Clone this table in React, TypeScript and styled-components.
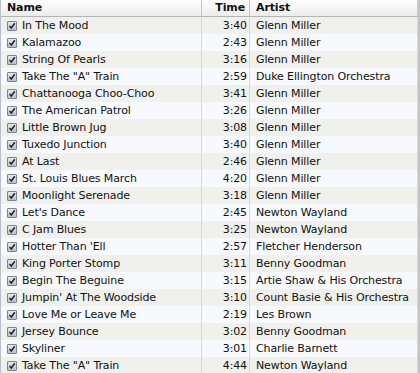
import styled, { createGlobalStyle } from 'styled-components';

const GlobalStyle = createGlobalStyle`
  html, body {
    margin: 0;
    padding: 0;
    background: #ffffff;
  }
`;

const Table = styled.div`
  width: 420px;
  height: 373px;
  overflow: hidden;
  font-family: 'Lucida Grande', 'DejaVu Sans', sans-serif;
  font-size: 11px;
  letter-spacing: -0.12px;
  color: #111111;
  border-left: 1px solid #b9c0c9;
  border-right: 2px solid #c4c4c4;
  box-sizing: border-box;
`;

const Grid = styled.div`
  display: grid;
  grid-template-columns: 201px 48px 1fr;
`;

const HeaderCell = styled.div<{ $align?: 'left' | 'right' }>`
  height: 16px;
  line-height: 16px;
  font-weight: bold;
  padding: 0 4px 0 6px;
  text-align: ${(p) => p.$align || 'left'};
  background: linear-gradient(#ffffff, #ececec);
  border-bottom: 1px solid #b4b4b4;
  border-right: 1px solid #c8c8c8;
  white-space: nowrap;
  overflow: hidden;
`;

const Cell = styled.div<{ $odd: boolean; $align?: 'left' | 'right' }>`
  display: flex;
  align-items: center;
  justify-content: ${(p) => (p.$align === 'right' ? 'flex-end' : 'flex-start')};
  gap: 5px;
  height: 17px;
  padding: 0 2px 0 6px;
  background: ${(p) => (p.$odd ? '#f0f0ec' : '#f7f9fc')};
  border-right: 1px solid #d9d9d9;
  white-space: nowrap;
  overflow: hidden;
`;

const Check = styled.span`
  display: inline-flex;
  width: 10px;
  height: 10px;
  box-sizing: border-box;
  border: 1px solid #7d848d;
  background: linear-gradient(#e4e8ee, #b8c0cb);
  border-radius: 1px;
  flex-shrink: 0;
  svg {
    display: block;
  }
`;

const tracks = [
  ['In The Mood', '3:40', 'Glenn Miller'],
  ['Kalamazoo', '2:43', 'Glenn Miller'],
  ['String Of Pearls', '3:16', 'Glenn Miller'],
  ['Take The "A" Train', '2:59', 'Duke Ellington Orchestra'],
  ['Chattanooga Choo-Choo', '3:41', 'Glenn Miller'],
  ['The American Patrol', '3:26', 'Glenn Miller'],
  ['Little Brown Jug', '3:08', 'Glenn Miller'],
  ['Tuxedo Junction', '3:40', 'Glenn Miller'],
  ['At Last', '2:46', 'Glenn Miller'],
  ['St. Louis Blues March', '4:20', 'Glenn Miller'],
  ['Moonlight Serenade', '3:18', 'Glenn Miller'],
  ["Let's Dance", '2:45', 'Newton Wayland'],
  ['C Jam Blues', '3:25', 'Newton Wayland'],
  ["Hotter Than 'Ell", '2:57', 'Fletcher Henderson'],
  ['King Porter Stomp', '3:11', 'Benny Goodman'],
  ['Begin The Beguine', '3:15', 'Artie Shaw & His Orchestra'],
  ["Jumpin' At The Woodside", '3:10', 'Count Basie & His Orchestra'],
  ['Love Me or Leave Me', '2:19', 'Les Brown'],
  ['Jersey Bounce', '3:02', 'Benny Goodman'],
  ['Skyliner', '3:01', 'Charlie Barnett'],
  ['Take The "A" Train', '4:44', 'Newton Wayland'],
];

function CheckBox() {
  return (
    <Check>
      <svg width="8" height="8" viewBox="0 0 8 8">
        <path d="M1.5 4 L3.3 6 L6.8 1.2" fill="none" stroke="#1d2530" strokeWidth="1.5" />
      </svg>
    </Check>
  );
}

export default function App() {
  return (
    <>
      <GlobalStyle />
      <Table>
        <Grid>
          <HeaderCell>Name</HeaderCell>
          <HeaderCell $align="right">Time</HeaderCell>
          <HeaderCell>Artist</HeaderCell>
          {tracks.map(([name, time, artist], i) => {
            const odd = i % 2 === 0;
            return [
              <Cell key={`n${i}`} $odd={odd}>
                <CheckBox />
                {name}
              </Cell>,
              <Cell key={`t${i}`} $odd={odd} $align="right">
                {time}
              </Cell>,
              <Cell key={`a${i}`} $odd={odd}>
                {artist}
              </Cell>,
            ];
          })}
        </Grid>
      </Table>
    </>
  );
}
